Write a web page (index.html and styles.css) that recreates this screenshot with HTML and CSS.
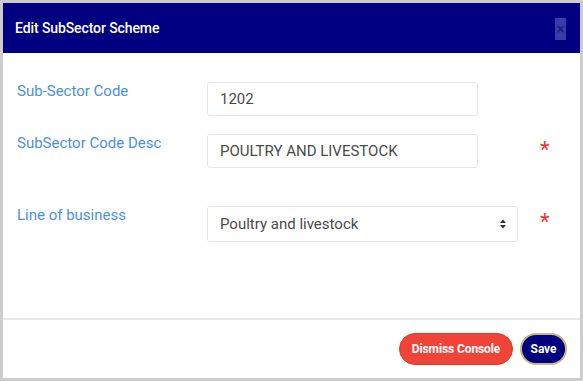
FILE: index.html
```html
<!DOCTYPE html>
<html lang="en">
<head>
  <meta charset="UTF-8">
  <title>Edit SubSector Scheme</title>
  <link rel="stylesheet" href="styles.css">
</head>
<body>

  <div class="modal">
    <div class="modal-header">
      <h4 class="modal-title">Edit SubSector Scheme</h4>
      <button class="close-btn" type="button">&times;</button>
    </div>

    <div class="modal-body">
      <div class="form-row">
        <label class="form-label">Sub-Sector Code</label>
        <div class="field">
          <input class="form-input" type="text" value="1202">
        </div>
      </div>

      <div class="form-row">
        <label class="form-label">SubSector Code Desc</label>
        <div class="field">
          <input class="form-input" type="text" value="POULTRY AND LIVESTOCK">
        </div>
        <span class="required">*</span>
      </div>

      <div class="form-row row-select">
        <label class="form-label">Line of business</label>
        <div class="field select-wrap">
          <select class="form-select">
            <option>Poultry and livestock</option>
          </select>
          <svg class="select-arrow" width="8" height="10" viewBox="0 0 8 10">
            <path d="M4 0.5 L7 4 L1 4 Z M4 9.5 L7 6 L1 6 Z" fill="#333"/>
          </svg>
        </div>
        <span class="required">*</span>
      </div>
    </div>

    <div class="modal-footer">
      <button class="btn btn-dismiss" type="button">Dismiss Console</button>
      <button class="btn btn-save" type="button">Save</button>
    </div>
  </div>

</body>
</html>
```

FILE: styles.css
```css
* {
  box-sizing: border-box;
}

html, body {
  margin: 0;
  padding: 0;
  height: 100%;
  background: #cdcdcd;
  font-family: Roboto, "Liberation Sans", sans-serif;
}

body {
  padding: 3px;
}

.modal {
  height: 100%;
  background: #fff;
  display: flex;
  flex-direction: column;
}

.modal-header {
  height: 50px;
  background: #000080;
  display: flex;
  align-items: center;
  justify-content: space-between;
  padding: 0 14px 0 12px;
}

.modal-title {
  margin: 0;
  color: #fff;
  font-size: 14px;
  font-weight: 500;
  letter-spacing: -0.1px;
}

.close-btn {
  width: 11px;
  height: 22px;
  padding: 0;
  border: none;
  background: #3a3aa8;
  color: #1c1c80;
  font-size: 14px;
  font-weight: bold;
  line-height: 22px;
  margin-top: 2px;
}

.modal-body {
  flex: 1;
  padding: 29px 14px 0 14px;
}

.form-row {
  display: flex;
  align-items: flex-start;
  margin-bottom: 18px;
}

.row-select {
  margin-top: 38px;
}

.form-label {
  width: 190px;
  color: #4a90e0;
  font-size: 15px;
  line-height: 18px;
}

.field {
  width: 311px;
}

.form-input {
  width: 271px;
  height: 34px;
  border: 1px solid #e6e6e6;
  border-radius: 3px;
  padding: 0 12px;
  font-family: Roboto, "Liberation Sans", sans-serif;
  font-size: 15px;
  color: #4a4a4a;
  background: #fff;
}

.select-wrap {
  position: relative;
}

.form-select {
  appearance: none;
  -webkit-appearance: none;
  width: 311px;
  height: 36px;
  border: 1px solid #e6e6e6;
  border-radius: 3px;
  padding: 0 12px;
  font-family: Roboto, "Liberation Sans", sans-serif;
  font-size: 15px;
  color: #4a4a4a;
  background: #fff;
}

.select-arrow {
  position: absolute;
  right: 11px;
  top: 13px;
}

.required {
  margin-left: 22px;
  color: #e53935;
  font-size: 22px;
  line-height: 32px;
}

.modal-footer {
  height: 60px;
  border-top: 2px solid #e8e8e8;
  display: flex;
  align-items: center;
  justify-content: flex-end;
  gap: 7px;
  padding: 0 13px 0 0;
}

.btn {
  height: 32px;
  border-radius: 16px;
  color: #fff;
  font-family: Roboto, "Liberation Sans", sans-serif;
  font-size: 12px;
  font-weight: bold;
  letter-spacing: -0.1px;
  cursor: pointer;
}

.btn-dismiss {
  width: 114px;
  padding: 0;
  background: #f04438;
  border: 1px solid #e03a30;
}

.btn-save {
  width: 47px;
  padding: 0;
  background: #000080;
  border: 2px solid #c9b877;
}
```
